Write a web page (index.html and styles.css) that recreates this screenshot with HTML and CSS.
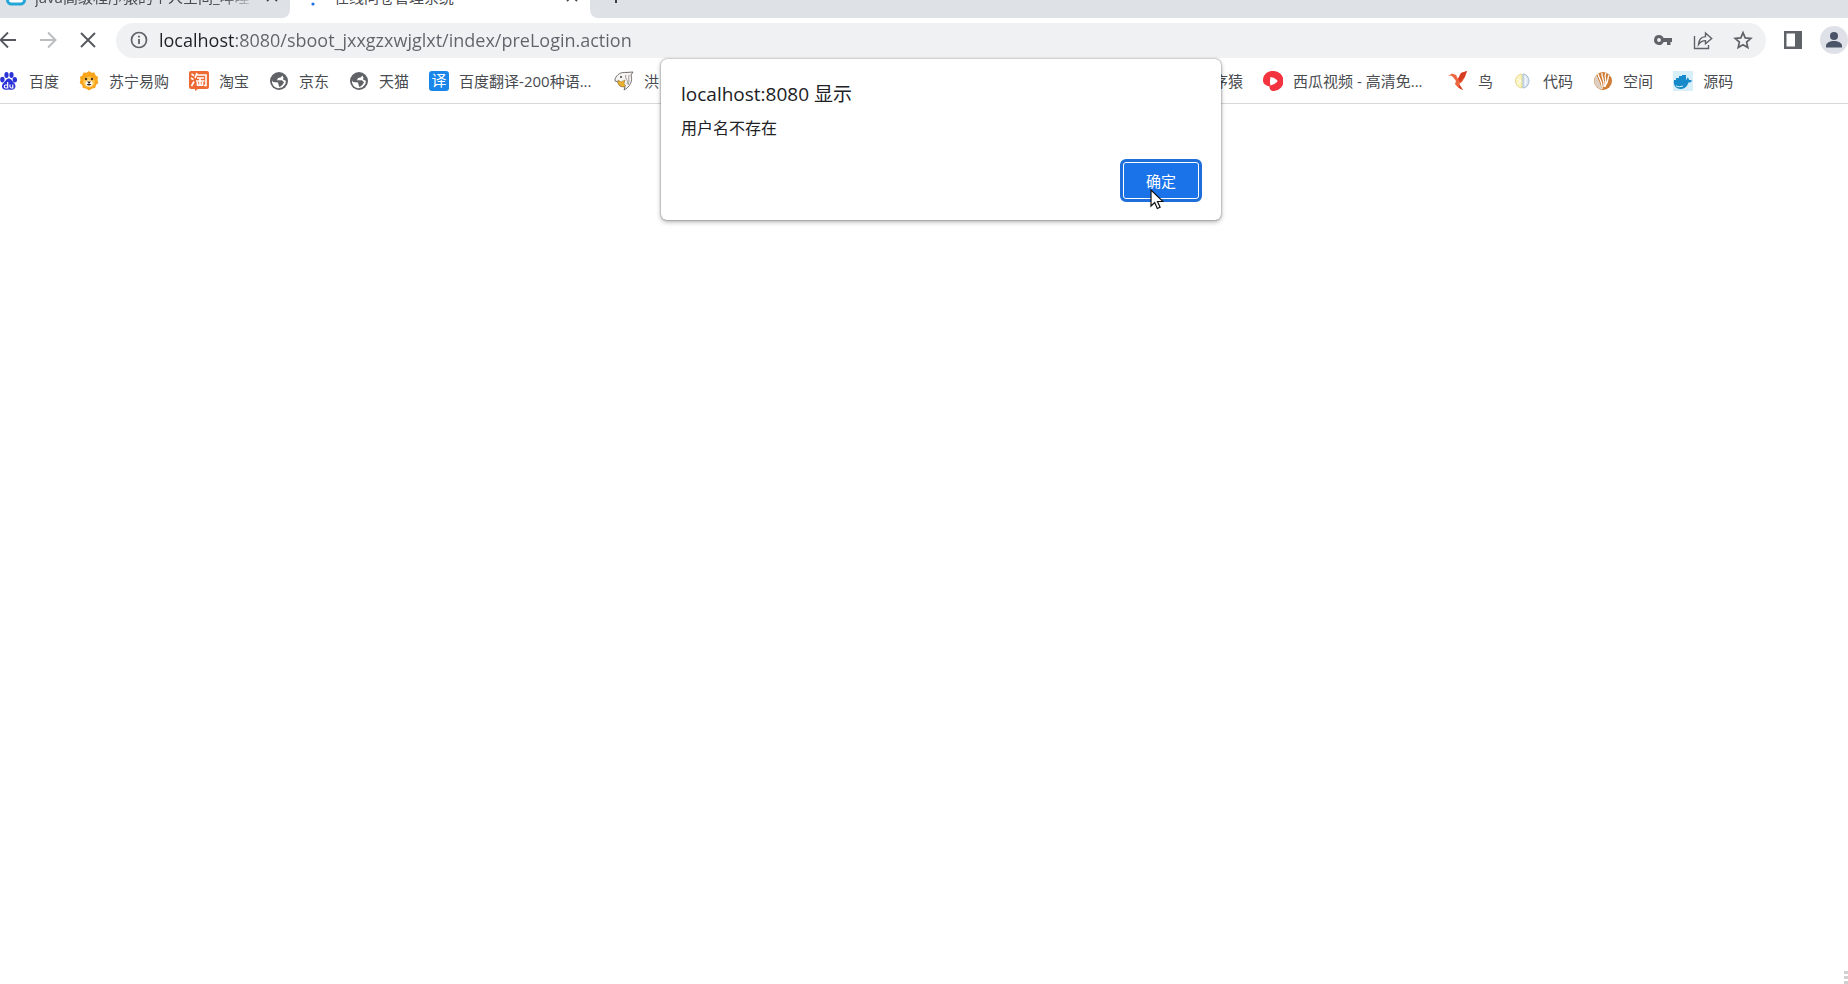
FILE: index.html
```
<!DOCTYPE html>
<html lang="zh-CN">
<head>
    <meta charset="UTF-8">
    <meta name="viewport" content="width=device-width, initial-scale=1.0">
    <title>在线问卷管理系统</title>
    <link rel="stylesheet" href="styles.css">
</head>
<body>
    <header class="browser">
        <div class="tab-strip">
            <div class="tab tab-first">
                <svg class="tab-icon" viewBox="0 0 20 20"><rect x="1.5" y="2" width="17" height="15" rx="4" fill="#fff" stroke="#22a7d8" stroke-width="3"/></svg>
                <span class="tab-title fade">java高级程序猿的个人空间_哔哩</span>
                <button class="tab-close" aria-label="关闭"><svg viewBox="0 0 16 16"><path d="M3 3l10 10M13 3L3 13" stroke="#44474a" stroke-width="1.8"/></svg></button>
            </div>
            <div class="tab tab-active">
                <svg class="tab-icon" viewBox="0 0 20 20"><circle cx="8" cy="17" r="1.6" fill="#1a73e8"/></svg>
                <span class="tab-title">在线问卷管理系统</span>
                <button class="tab-close" aria-label="关闭"><svg viewBox="0 0 16 16"><path d="M3 3l10 10M13 3L3 13" stroke="#44474a" stroke-width="1.8"/></svg></button>
            </div>
            <div class="tab tab-rest">
                <button class="tab-close" aria-label="新标签页"><svg viewBox="0 0 16 16"><path d="M8 1v14M1 8h14" stroke="#3c4043" stroke-width="2"/></svg></button>
            </div>
        </div>

        <div class="toolbar">
            <button class="tool" aria-label="后退"><svg viewBox="0 0 20 20" fill="none" stroke="#55585c" stroke-width="1.9"><path d="M18 10H3M10 2.5L2.5 10l7.5 7.5"/></svg></button>
            <button class="tool" aria-label="前进"><svg viewBox="0 0 20 20" fill="none" stroke="#babcbe" stroke-width="1.9"><path d="M2 10h15M10 2.5L17.5 10 10 17.5"/></svg></button>
            <button class="tool" aria-label="停止"><svg viewBox="0 0 20 20" fill="none" stroke="#55585c" stroke-width="1.9"><path d="M3 3l14 14M17 3L3 17"/></svg></button>
            <div class="address">
                <svg class="info" viewBox="0 0 18 18"><circle cx="9" cy="9" r="7.5" fill="none" stroke="#5f6368" stroke-width="1.7"/><path d="M9 8v5M9 4.8v1.8" stroke="#5f6368" stroke-width="1.8"/></svg>
                <input class="url" type="text" aria-label="地址" value="localhost:8080/sboot_jxxgzxwjglxt/index/preLogin.action">
                <button class="tool" aria-label="密码"><svg viewBox="0 0 20 20"><path d="M6 5a5 5 0 1 0 4.6 7H14v3h3.5v-3H19V8h-8.4A5 5 0 0 0 6 5zm0 3.1a1.9 1.9 0 1 1 0 3.8 1.9 1.9 0 0 1 0-3.800z" fill="#5f6368"/></svg></button>
                <button class="tool" aria-label="分享"><svg viewBox="0 0 20 20" fill="none" stroke="#5f6368" stroke-width="1.4"><path d="M1.5 6v12.500h14V15M5.5 14.5c.4-5 3-7.7 7-7.9V3l6.2 5.5-6.2 5.3v-3.2c-3 0-5.2 1.2-7 3.9z"/></svg></button>
                <button class="tool" aria-label="收藏"><svg viewBox="0 0 20 20" fill="none" stroke="#5f6368" stroke-width="1.7"><path d="M10 2.7l2.2 5.2 5.6.5-4.2 3.7 1.2 5.5-4.8-2.9-4.8 2.9 1.2-5.5-4.2-3.7 5.6-.5z"/></svg></button>
            </div>
            <button class="tool" aria-label="侧边栏"><svg viewBox="0 0 20 20"><path d="M1 1h18v18H1zM3.5 3.5v13H12v-13z" fill="#5f6368" fill-rule="evenodd"/></svg></button>
            <button class="tool avatar" aria-label="用户"><svg viewBox="0 0 28 28"><circle cx="14" cy="14" r="14" fill="#dfe1e8"/><circle cx="14" cy="10" r="4" fill="#4a5568"/><path d="M6 21.5V20c0-3.5 4-5 8-5s8 1.500 8 5v1.5z" fill="#4a5568"/></svg></button>
        </div>

        <nav class="bookmarks">
            <a class="bookmark" href="#">
                <svg viewBox="0 0 20 20" fill="#2a32d8"><ellipse cx="3.4" cy="8.6" rx="2.2" ry="2.8"/><ellipse cx="7.5" cy="4" rx="2.1" ry="3"/><ellipse cx="12.5" cy="4" rx="2.1" ry="3"/><ellipse cx="15.8" cy="8.8" rx="2.2" ry="2.7"/><path d="M9.8 7.5c2.500 0 3.200 2.500 5 4.300 3 2.800 1.700 7-1.800 7-1.200 0-2-.3-3.200-.3s-2 .3-3.200.3c-3.700 0-5-4.200-1.800-7 2-1.800 2.500-4.300 5-4.300z"/><path d="M8.7 11v6H6.5c-1.500 0-1.500-3 0-3h2M11 13.5V16q.2 1 1.2 1h1.600v-3.500" fill="none" stroke="#fff" stroke-width="1.2"/></svg>
                <span>百度</span>
            </a>
            <a class="bookmark" href="#">
                <svg viewBox="0 0 20 20"><path d="M10 0l2.500 1.800 3-.3 1.100 2.900 2.500 1.700-.6 3 .8 3-2.300 2-.8 3-3 .3L10 19.500l-3-2.100-3.100-.3-.8-3-2.400-2 .8-3-.6-3 2.500-1.700 1.100-2.900 3 .3z" fill="#f9a41a"/><ellipse cx="10" cy="11" rx="6" ry="5.5" fill="#ffc44b"/><circle cx="7" cy="8" r="1.2" fill="#47301b"/><circle cx="13" cy="8" r="1.2" fill="#47301b"/><ellipse cx="10" cy="12.5" rx="3.6" ry="3" fill="#fff"/><path d="M8 10.5h4l-2 2.500zM7.5 13q2.500 3 5 0" fill="#33251a"/></svg>
                <span>苏宁易购</span>
            </a>
            <a class="bookmark" href="#">
                <svg viewBox="0 0 20 20"><path d="M2 0h16q2 0 2 2v14q0 2-2 2H9l-3 2v-2H2q-2 0-2-2V2q0-2 2-2z" fill="#ee6a35"/><path d="M2.5 3l2.500 1.700M2 7l2.500 1.600M2.5 15l2.500-4.500M8 2L6 7M7.5 4H17v10.500h-2M8 7h7M7 10h8.500M11 7v7M8.5 11v3.200h5V11" fill="none" stroke="#fff" stroke-width="1.6"/></svg>
                <span>淘宝</span>
            </a>
            <a class="bookmark" href="#">
                <svg viewBox="0 0 20 20"><circle cx="10" cy="10" r="9" fill="#5f6368"/><path d="M10.5 3.2l3 1.300-2 2-2.500.5-1 2.300h5l2 2-1.500 2.500-3 2.500-1-2.500-.5-2.300L4 11l-1-1.500v2c1 3.700 3.500 5.500 6.500 5.700l4-1 3-3.500.3-3-2.800-1.200.5-2-1.500-2.200z" fill="#fff"/></svg>
                <span>京东</span>
            </a>
            <a class="bookmark" href="#">
                <svg viewBox="0 0 20 20"><circle cx="10" cy="10" r="9" fill="#5f6368"/><path d="M10.5 3.2l3 1.300-2 2-2.500.5-1 2.300h5l2 2-1.500 2.500-3 2.500-1-2.500-.5-2.300L4 11l-1-1.500v2c1 3.700 3.500 5.500 6.500 5.700l4-1 3-3.500.3-3-2.800-1.200.5-2-1.500-2.200z" fill="#fff"/></svg>
                <span>天猫</span>
            </a>
            <a class="bookmark long" href="#">
                <b class="translate">译</b>
                <span>百度翻译-200种语...</span>
            </a>
            <div class="covered">
                <a class="bookmark" href="#">
                    <svg viewBox="0 0 20 20"><path d="M1 8c2-5 6-7 11-6.500l7-.5-2 3c2 6-1 12-7 15l1-3-5-1-2-4-3-1z" fill="#f4f4f4" stroke="#77706c"/><path d="M4 9l3 2 4-2-1 4 2 2-4 1-4-3z" fill="#eeb12c" stroke="#8a6a2a" stroke-width=".5"/><circle cx="7" cy="6" r="1" fill="#444"/><path d="M12 4c-2 3 3 5 1 9M15 4c-1 3 1 6-1 10" fill="none" stroke="#a09a96"/></svg>
                    <span>洪</span>
                </a>
                <a class="bookmark" href="#"><span>程序猿</span></a>
            </div>
            <a class="bookmark long" href="#">
                <svg viewBox="0 0 20 20"><path d="M10 0a10 10 0 1 1 1 20c-3 .3-4.500-1.500-4.500-4.500C3 14.500 0 13 0 9.500 0 4 4 0 10 0z" fill="#f3343f"/><path d="M7.500 6q3 0 6.500 3 .8 1 0 2-3 3-6.500 3.500-1-4 0-8.500z" fill="#fff"/></svg>
                <span>西瓜视频 - 高清免...</span>
            </a>
            <a class="bookmark" href="#">
                <svg viewBox="0 0 20 20"><path d="M0 5l4-2.500 4 1.500 2 4 3-6 6-2-2 6-3 5-3 2 4 6-5-2.500-3-3.500 1-3-3-4-2-1.500z" fill="#ee6640"/><path d="M10 8l3-6 6-2-3 7-4 4z" fill="#d63c22"/><path d="M11 13l4 6-4-2z" fill="#d63c22"/></svg>
                <span>鸟</span>
            </a>
            <a class="bookmark" href="#">
                <svg viewBox="0 0 20 20"><path d="M9 3a6.500 7 0 0 0 0 14z" fill="#faf3bb" stroke="#e5d990"/><path d="M10 3a6 7 0 0 1 0 14z" fill="#dce8f4" stroke="#a9bdd0"/><path d="M4 8l4 2-4 3M12 5l1 4-1 5" fill="none" stroke="#fff"/></svg>
                <span>代码</span>
            </a>
            <a class="bookmark" href="#">
                <svg viewBox="0 0 20 20"><circle cx="10" cy="10" r="9" fill="#cf7c35"/><path d="M3.500 4A9 9 0 0 0 8 18.500c1-4-2-8-4.500-14.500z" fill="#ddd0c2"/><path d="M5 3c1 5 5 8 4 15M9 2c-1 4 3 7 2 14M13 2c-3 4 2 7-1 14M16 4c-2 4 0 7-4 11" fill="none" stroke="#fff" stroke-width="1.3"/></svg>
                <span>空间</span>
            </a>
            <a class="bookmark" href="#">
                <svg viewBox="0 0 20 20"><path d="M0 0h20v20H0z" fill="#d8eef8"/><path d="M1 9h2V7h3V5h3V4h4v5c1-.5 1-2 1.500-2.500 1 .5 1.500 1.500 1.500 2.500 1 0 2 0 3 .5-.5 1.500-2 2-3.500 2C14 16 11 18 7.500 18 3 18 0 14 1 9z" fill="#168acb"/><path d="M3 15q3 1.500 7 0" fill="none" stroke="#d8eef8"/></svg>
                <span>源码</span>
            </a>
        </nav>
    </header>

    <main class="page"></main>

    <div class="dialog" role="alertdialog" aria-labelledby="dialogTitle" aria-describedby="dialogText">
        <h1 id="dialogTitle">localhost:8080 显示</h1>
        <p id="dialogText">用户名不存在</p>
        <div class="dialog-actions">
            <button class="ok">确定</button>
        </div>
        <svg class="cursor" viewBox="0 0 14 21"><path d="M1 1v16l3.700-3.500 2.600 6 2.800-1.200-2.600-5.800H13z" fill="#fff" stroke="#111" stroke-width="1.2"/></svg>
    </div>

    <div class="grip"><i></i><i></i><i></i></div>
</body>
</html>
```
FILE: styles.css
```
* {
    box-sizing: border-box;
}
body {
    display: flex;
    flex-direction: column;
    min-height: 100vh;
    margin: 0;
    overflow: hidden;
    background-color: #fff;
    font-family: "Open Sans", "Noto Sans CJK SC", sans-serif;
    font-size: 15px;
    color: #484b4f;
}
button {
    padding: 0;
    border: none;
    background: none;
    font-family: inherit;
}
svg {
    display: block;
    flex-shrink: 0;
}

/* tabs */
.tab-strip {
    display: flex;
    height: 18px;
    overflow: hidden;
    background: linear-gradient(to right, #dee1e6 280px, #fff 280px, #fff 600px, #dee1e6 600px);
}
.tab {
    display: flex;
    align-items: flex-end;
    width: 300px;
    padding: 0 10px 11px 5px;
    background-color: #fff;
}
.tab-first {
    width: 290px;
    background-color: #dee1e6;
    border-bottom-right-radius: 8px;
}
.tab-active {
    padding-left: 14px;
}
.tab-rest {
    flex: 1;
    padding-left: 18px;
    background-color: #dee1e6;
    border-bottom-left-radius: 8px;
}
.tab-icon {
    width: 22px;
    height: 20px;
}
.tab-title {
    flex: 1;
    margin: 0 8px;
    height: 20px;
    line-height: 20px;
    white-space: nowrap;
    overflow: hidden;
}
.fade {
    -webkit-mask-image: linear-gradient(to right, #000 85%, transparent);
    mask-image: linear-gradient(to right, #000 85%, transparent);
}
.tab-close {
    margin-bottom: 3px;
}
.tab-close svg {
    width: 16px;
    height: 16px;
}

/* toolbar */
.toolbar {
    display: flex;
    align-items: center;
    gap: 20px;
    height: 44px;
    margin-left: -2px;
}
.tool {
    flex-shrink: 0;
    width: 20px;
    height: 20px;
}
.tool svg {
    width: 100%;
    height: 100%;
}
.address {
    display: flex;
    flex: 1;
    align-items: center;
    gap: 20px;
    height: 35px;
    margin: 0 -3px 0 -2px;
    padding: 0 13px 0 14px;
    border-radius: 18px;
    background-color: #f0f1f3;
}
.info {
    width: 18px;
    height: 18px;
}
.url {
    flex: 1;
    min-width: 0;
    margin-left: -9px;
    padding: 0;
    border: none;
    outline: none;
    font-family: inherit;
    font-size: 18px;
    color: transparent;
    /* host part is darker than the path */
    background: linear-gradient(to right, #202124 76px, #5f6368 76px);
    -webkit-background-clip: text;
    background-clip: text;
}
.avatar {
    width: 28px;
    height: 28px;
    margin-left: -3px;
}

/* bookmarks */
.bookmarks {
    display: flex;
    align-items: center;
    gap: 20px;
    height: 42px;
    margin-left: -1px;
    padding-bottom: 4px;
    border-bottom: 1px solid #d5d7da;
}
.bookmark {
    display: flex;
    align-items: center;
    gap: 10px;
    white-space: nowrap;
    color: #484b4f;
    text-decoration: none;
}
.long {
    min-width: 165px;
}
.bookmark svg,
.translate {
    width: 20px;
    height: 20px;
}
.translate {
    border-radius: 3px;
    background-color: #1a86ea;
    color: #fff;
    font-size: 15px;
    font-weight: normal;
    line-height: 19px;
    text-align: center;
}
.covered {
    display: flex;
    justify-content: space-between;
    width: 629px;
}

.page {
    flex: 1;
}

/* alert */
.dialog {
    position: absolute;
    top: 59px;
    left: 661px;
    width: 560px;
    padding: 21px 19px 18px 20px;
    border-radius: 6px;
    background-color: #fff;
    box-shadow: 0 0 2px rgba(0, 0, 0, 0.5), 0 2px 5px rgba(0, 0, 0, 0.3);
    color: #202124;
}
.dialog h1 {
    margin: 0;
    font-size: 19px;
    font-weight: normal;
    line-height: 28px;
}
.dialog p {
    margin: 8px 0 19px;
    font-size: 16px;
    line-height: 24px;
}
.dialog-actions {
    display: flex;
    justify-content: flex-end;
}
.ok {
    width: 82px;
    height: 43px;
    border: 3px solid #1f6fdb;
    border-radius: 6px;
    background-color: #1a73e8;
    box-shadow: inset 0 0 0 1px #fff;
    color: #fff;
    font-size: 15px;
}
.cursor {
    position: absolute;
    top: 130px;
    left: 489px;
    width: 14px;
    height: 21px;
}
.grip {
    position: absolute;
    right: 0;
    bottom: 0;
    display: flex;
    flex-direction: column;
    gap: 2px;
}
.grip i {
    width: 4px;
    height: 3px;
    background-color: #d0d0d0;
}
```
